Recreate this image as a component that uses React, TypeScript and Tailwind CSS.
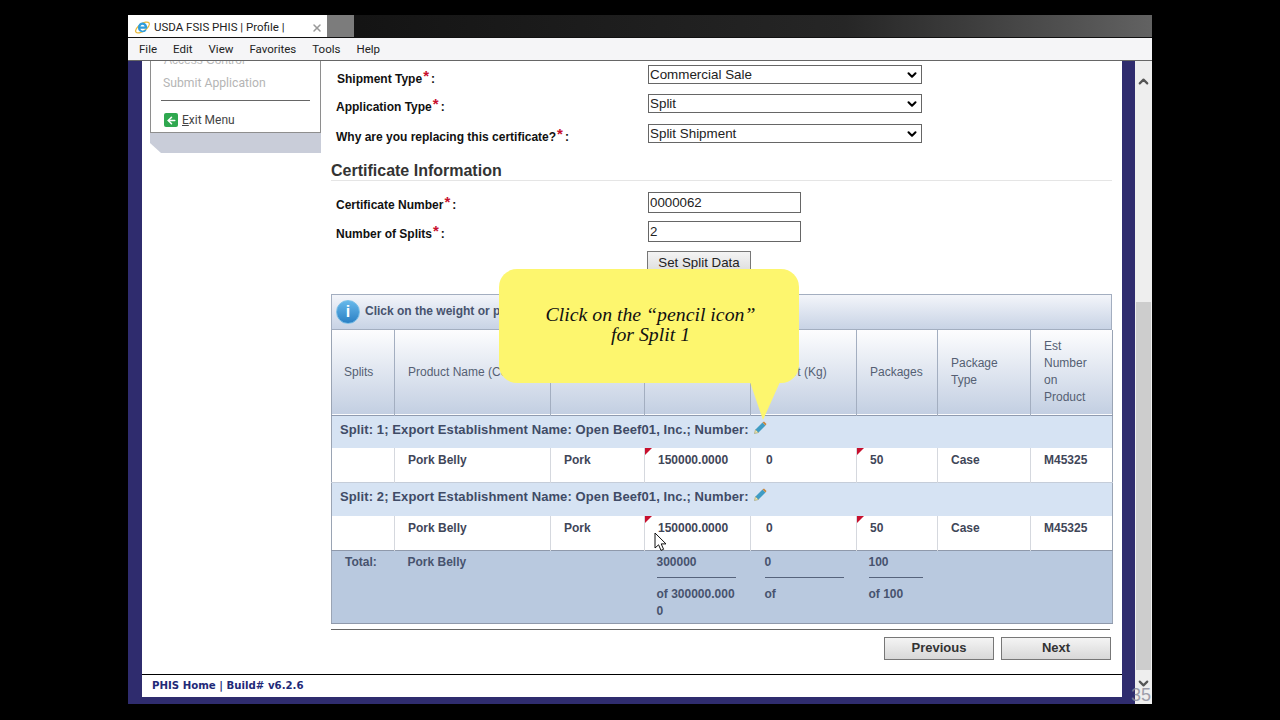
import { ArrowLeft, ChevronDown, ChevronUp, X } from "lucide-react";

const arial = "font-['Liberation_Sans',Arial,sans-serif]";

function Req() {
  return <span className="relative top-[-2px] ml-[1px] mr-[2px] text-[15px] leading-none font-bold text-[#c8102e]">*</span>;
}

function Select({ value }: { value: string }) {
  return (
    <div className="flex h-[19px] w-[274px] items-center justify-between border border-[#666] bg-white pl-[1px] pr-[2px] text-[13.4px] text-[#222]">
      <span className="pt-[1px]">{value}</span>
      <ChevronDown className="h-[14px] w-[14px] text-black" strokeWidth={3.5} />
    </div>
  );
}

function Input({ value }: { value: string }) {
  return (
    <div className="flex h-[21px] w-[153px] items-center border border-[#666] bg-white pl-[1px] text-[13.3px] text-[#222]">
      {value}
    </div>
  );
}

function Pencil() {
  return (
    <svg width="13" height="13" viewBox="0 0 13 13" className="relative z-10 ml-[5px] inline-block align-[0px]">
      <polygon points="0.5,12.5 1.5,8.5 4.5,11.5" fill="#efe7b0" stroke="#8a8a50" strokeWidth="0.5" />
      <polygon points="1.5,8.5 8.5,1.5 11.5,4.5 4.5,11.5" fill="#3f9cc4" />
      <polygon points="8.5,1.5 10,0.5 12.5,3 11.5,4.5" fill="#c8863c" />
    </svg>
  );
}

function Flag() {
  return (
    <svg width="7" height="7" viewBox="0 0 7 7" className="absolute left-0 top-0">
      <polygon points="0,0 7,0 0,7" fill="#c8102e" />
    </svg>
  );
}

function SplitRows({ n, head, pad }: { n: number; head: string; pad: string }) {
  const cell = "border-r border-[#d5d8de] pt-[3px] align-top font-bold text-[#3f4658]";
  return (
    <>
      <tr className={`${head} bg-[#d6e3f3] border-t border-[#c5cdd9]`}>
        <td colSpan={8} className={`${pad} pl-[8px] text-[13px] font-bold tracking-[0.1px] text-[#3f4b66]`}>
          Split: {n}; Export Establishment Name: Open Beef01, Inc.; Number:
          <Pencil />
        </td>
      </tr>
      <tr className="h-[34px] bg-white text-[12px]">
        <td className={cell}></td>
        <td className={`${cell} pl-[13px]`}>Pork Belly</td>
        <td className={`${cell} pl-[13px]`}>Pork</td>
        <td className={`${cell} relative pl-[13px]`}>
          <Flag />
          150000.0000
        </td>
        <td className={`${cell} pl-[15px]`}>0</td>
        <td className={`${cell} relative pl-[13px]`}>
          <Flag />
          50
        </td>
        <td className={`${cell} pl-[13px]`}>Case</td>
        <td className="pl-[13px] pt-[3px] align-top font-bold text-[#3f4658]">M45325</td>
      </tr>
    </>
  );
}

function Total({ top, bottom, line, pad }: { top: string; bottom: string; line: string; pad: string }) {
  return (
    <td className={`${pad} pt-[4px] align-top font-bold text-[#47536e]`}>
      <div className="h-[14px] leading-[14px]">{top}</div>
      <div className={`mt-[8px] h-px bg-[#56637c] ${line}`} />
      <div className="mt-[8px] w-[79px] break-all leading-[17px]">{bottom}</div>
    </td>
  );
}

export default function App() {
  const th = "border-r border-[#a3aec0] pl-[13px] font-normal text-left leading-[17px]";
  const chrome = "font-['Roboto',sans-serif] text-[11.5px] text-[#222]";
  return (
    <div className={`h-screen w-screen overflow-hidden bg-black pl-[128px] pt-[15px] ${arial}`}>
      <div className="relative flex h-[689px] w-[1024px] flex-col">
        {/* tab strip */}
        <div className="flex h-[23px] border-b border-[#111] bg-gradient-to-r from-[#0c0c0c] via-[#262626] via-70% to-[#626262]">
          <div className={`flex w-[199px] items-center bg-white pl-[6px] pr-[4px] pt-[3px] ${chrome}`}>
            <svg width="17" height="17" viewBox="0 0 17 17" className="mr-[3px] shrink-0">
              <ellipse cx="8.5" cy="8.5" rx="8" ry="3.6" transform="rotate(-35 8.5 8.5)" fill="none" stroke="#e8b93a" strokeWidth="1.2" />
              <path d="M4 8.5a4.6 4.6 0 1 1 8.9 1.2H6.4a2.4 2.4 0 0 0 4.3 1h2a4.6 4.6 0 0 1-8.7-2.2zM6.4 7.6h4.3a2.2 2.2 0 0 0-4.3 0z" fill="#2f9ddb" />
            </svg>
            <span className="whitespace-nowrap">USDA FSIS PHIS | Profile |</span>
            <X className="ml-auto h-[12px] w-[12px] text-[#999]" strokeWidth={3} />
          </div>
          <div className="w-[27px] bg-[#7c7c7c]" />
        </div>
        {/* menu bar */}
        <div className={`flex h-[23px] items-center gap-[16px] border-b border-[#666] bg-[#f5f5f7] pl-[11px] pt-[2px] ${chrome}`}>
          <span>File</span>
          <span>Edit</span>
          <span>View</span>
          <span>Favorites</span>
          <span>Tools</span>
          <span>Help</span>
        </div>

        <div className="flex min-h-0 flex-1">
          <div className="flex w-[1007px] flex-col border-x-[14px] border-x-[#2f2c6e] border-r-[13px] border-b-[7px] border-b-[#2f2c6e] bg-white">
            <div className="flex min-h-0 flex-1 overflow-hidden">
              {/* side menu */}
              <div className="ml-[8px] w-[171px] shrink-0">
                <div className="h-[72px] overflow-hidden border-x border-b border-[#8e8e8e] bg-white">
                  <div className="-mt-[8px] pl-[13px] text-[12px] leading-[14px] text-[#bbb]">Access Control</div>
                  <div className="mt-[8px] pl-[12px] font-['Roboto',sans-serif] text-[12.2px] leading-[16px] text-[#b5b5b5]">Submit Application</div>
                  <div className="mx-[10px] mt-[9px] h-px bg-[#666]" />
                  <div className="mt-[12px] flex items-center pl-[13px] font-['Roboto',sans-serif] text-[12px] leading-[14px] text-[#444]">
                    <span className="mr-[4px] flex h-[14px] w-[14px] items-center justify-center rounded-[2px] bg-[#2fa84f]">
                      <ArrowLeft className="h-[11px] w-[11px] text-white" strokeWidth={3.5} />
                    </span>
                    <span><span className="underline">E</span>xit Menu</span>
                  </div>
                </div>
                <div className="h-[20px] bg-[#c9cdd9] [clip-path:polygon(0_0,100%_0,100%_100%,11px_100%,0_10px)]" />
              </div>

              {/* form and table */}
              <div className="ml-[10px] w-[781px] shrink-0 text-[12px] text-[#111]">
                <div className="flex h-[33px] items-start pl-[6px] pt-[4px]">
                  <div className="w-[311px] pt-[5px] font-bold">Shipment Type<Req />:</div>
                  <Select value="Commercial Sale" />
                </div>
                <div className="flex h-[30px] items-start pl-[5px]">
                  <div className="w-[312px] pt-[4px] font-bold">Application Type<Req />:</div>
                  <Select value="Split" />
                </div>
                <div className="flex h-[30px] items-start pl-[5px]">
                  <div className="w-[312px] pt-[4px] font-bold">Why are you replacing this certificate?<Req />:</div>
                  <Select value="Split Shipment" />
                </div>
                <div className="mt-[7px] h-[20px] border-b border-[#e5e5e5] text-[16px] font-bold leading-[20px] text-[#333]">
                  Certificate Information
                </div>
                <div className="mt-[11px] flex h-[21px] pl-[5px]">
                  <div className="w-[312px] pt-[4px] font-bold">Certificate Number<Req />:</div>
                  <Input value="0000062" />
                </div>
                <div className="mt-[8px] flex h-[21px] pl-[5px]">
                  <div className="w-[312px] pt-[4px] font-bold">Number of Splits<Req />:</div>
                  <Input value="2" />
                </div>
                <div className="mt-[9px] pl-[316px]">
                  <div className="flex h-[23px] w-[104px] items-center justify-center border border-[#777] bg-gradient-to-b from-[#f4f4f4] to-[#dcdcdc] text-[13.3px] text-[#222]">
                    Set Split Data
                  </div>
                </div>

                <div className="mt-[20px] flex h-[36px] items-center border border-[#a3aec0] bg-gradient-to-b from-[#f3f5fa] to-[#c8d3e5] pl-[4px]">
                  <span className="mr-[5px] flex h-[24px] w-[24px] items-center justify-center rounded-full border border-[#7cc0e8] bg-gradient-to-b from-[#66b8ea] to-[#2a80c4] text-[16px] font-bold text-white">
                    i
                  </span>
                  <span className="pb-[2px] font-bold text-[#47536e]">Click on the weight or packages value to update it.</span>
                </div>
                <table className="w-[781px] table-fixed border-collapse border-x border-[#9aa4b4] text-[12px]">
                  <colgroup>
                    <col className="w-[63px]" />
                    <col className="w-[156px]" />
                    <col className="w-[94px]" />
                    <col className="w-[106px]" />
                    <col className="w-[106px]" />
                    <col className="w-[81px]" />
                    <col className="w-[93px]" />
                    <col className="w-[82px]" />
                  </colgroup>
                  <thead>
                    <tr className="h-[85px] border-b border-[#8f9bb0] bg-gradient-to-b from-[#fdfdfe] to-[#c3cfe2] text-[#555f73]">
                      <th className={`${th} !pl-[12px]`}>Splits</th>
                      <th className={`${th} whitespace-nowrap`}>Product Name (Common)</th>
                      <th className={th}>Species</th>
                      <th className={th}>Net Wt (Lb)</th>
                      <th className={`${th} whitespace-nowrap`}>Net Wt (Kg)</th>
                      <th className={th}>Packages</th>
                      <th className={th}>Package<br />Type</th>
                      <th className="pl-[13px] text-left font-normal leading-[17px]">Est<br />Number<br />on<br />Product</th>
                    </tr>
                  </thead>
                  <tbody>
                    <SplitRows n={1} head="h-[33px]" pad="pb-[5px]" />
                    <SplitRows n={2} head="h-[34px]" pad="pb-[6px]" />
                    <tr className="h-[73px] border-y border-y-[#8f99ab] bg-[#b9c9df]">
                      <td className="pl-[13px] pt-[2px] align-top font-bold text-[#47536e]">Total:</td>
                      <td className="pl-[13px] pt-[2px] align-top font-bold text-[#47536e]">Pork Belly</td>
                      <td></td>
                      <Total top="300000" bottom="of 300000.0000" line="w-[79px]" pad="pl-[12px]" />
                      <Total top="0" bottom="of" line="w-[79px]" pad="pl-[14px]" />
                      <Total top="100" bottom="of 100" line="w-[54px]" pad="pl-[12px]" />
                      <td></td>
                      <td></td>
                    </tr>
                  </tbody>
                </table>
                <div className="mt-[5px] h-px w-[779px] bg-[#666]" />
                <div className="mt-[7px] flex w-[780px] justify-end gap-[7px]">
                  <div className="flex h-[23px] w-[110px] items-center justify-center border border-[#777] bg-gradient-to-b from-[#f4f4f4] to-[#d8d8d8] text-[13px] font-bold text-[#333]">Previous</div>
                  <div className="flex h-[23px] w-[110px] items-center justify-center border border-[#777] bg-gradient-to-b from-[#f4f4f4] to-[#d8d8d8] text-[13px] font-bold text-[#333]">Next</div>
                </div>
              </div>
            </div>
            {/* footer */}
            <div className="flex h-[23px] shrink-0 items-center border-t border-t-black pb-[1px] pl-[10px] font-['DejaVu_Sans',sans-serif] text-[10.2px] font-bold text-[#1f2a78]">
              PHIS Home | Build# v6.2.6
            </div>
          </div>

          {/* scrollbar */}
          <div className="relative flex w-[17px] flex-col bg-[#eeeeee]">
            <ChevronUp className="mx-auto mt-[13px] h-[15px] w-[15px] text-[#555]" strokeWidth={3.5} />
            <div className="mx-px mt-[213px] h-[368px] bg-[#cdcdcd]" />
            <ChevronDown className="mx-auto mt-[6px] h-[15px] w-[15px] text-[#555]" strokeWidth={3.5} />
            <span className="absolute bottom-0 right-[1px] text-[18px] leading-[18px] text-[#8a8a9a] opacity-80">35</span>
          </div>
        </div>

        {/* callout */}
        <div className="absolute left-[371px] top-[254px] flex h-[114px] w-[300px] flex-col items-center rounded-[18px] bg-[#fdf66e] pl-[3px] pt-[35px] font-['Liberation_Serif',serif] text-[19.8px] italic leading-[20px] text-[#111]">
          <span>Click on the “pencil icon”</span>
          <span>for Split 1</span>
        </div>
        <svg width="32" height="42" viewBox="0 0 32 42" className="absolute left-[622px] top-[367px]">
          <polygon points="0,0 30,0 13,38" fill="#fdf66e" />
        </svg>

        {/* mouse pointer */}
        <svg width="14" height="20" viewBox="0 0 14 20" className="absolute left-[526px] top-[517px]">
          <path d="M1 1v15l3.6-3.2 2.4 5.6 2.6-1.1-2.4-5.4h4.8z" fill="#fff" stroke="#111" strokeWidth="1" />
        </svg>
      </div>
    </div>
  );
}
